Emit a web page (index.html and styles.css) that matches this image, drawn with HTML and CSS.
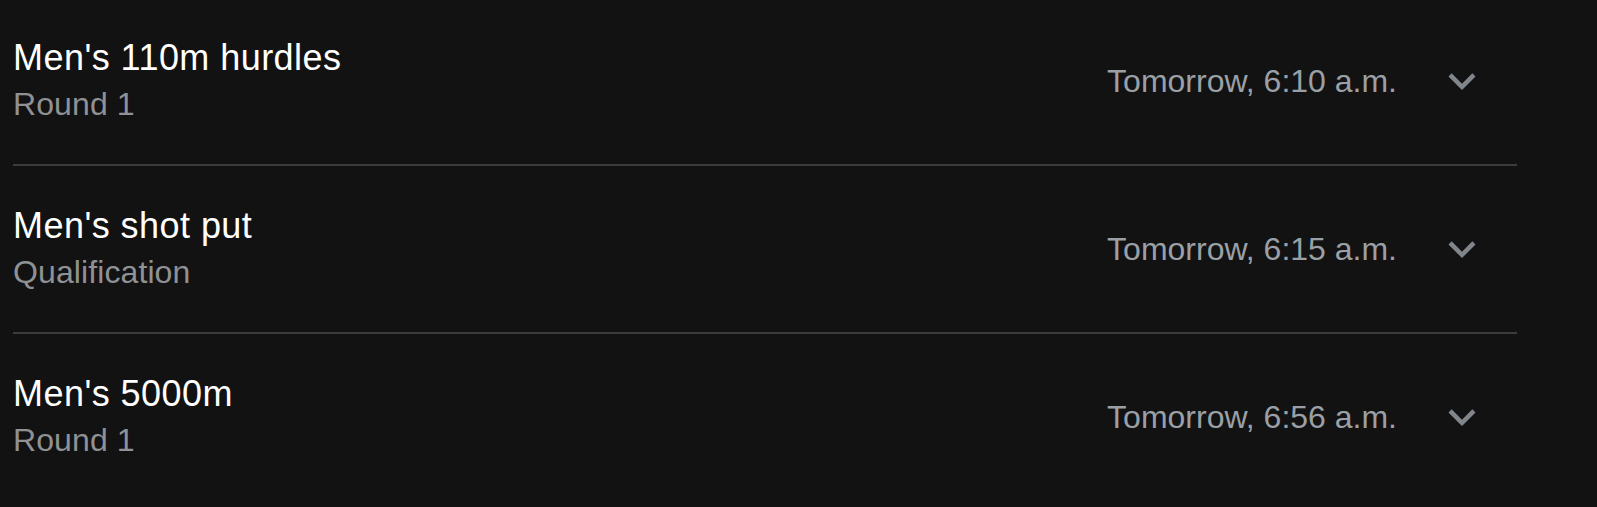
FILE: index.html
```html
<!DOCTYPE html>
<html lang="en">
<head>
<meta charset="utf-8">
<title>Schedule</title>
<link rel="stylesheet" href="styles.css">
</head>
<body>
<div class="list">
  <div class="row">
    <div class="info">
      <div class="title">Men's 110m hurdles</div>
      <div class="sub">Round 1</div>
    </div>
    <div class="meta">
      <span class="time">Tomorrow, 6:10 a.m.</span>
      <svg class="chev" viewBox="0 0 24 24"><path d="M16.59 8.59L12 13.17 7.41 8.59 6 10l6 6 6-6z"/></svg>
    </div>
  </div>
  <div class="row">
    <div class="info">
      <div class="title">Men's shot put</div>
      <div class="sub">Qualification</div>
    </div>
    <div class="meta">
      <span class="time">Tomorrow, 6:15 a.m.</span>
      <svg class="chev" viewBox="0 0 24 24"><path d="M16.59 8.59L12 13.17 7.41 8.59 6 10l6 6 6-6z"/></svg>
    </div>
  </div>
  <div class="row last">
    <div class="info">
      <div class="title">Men's 5000m</div>
      <div class="sub">Round 1</div>
    </div>
    <div class="meta">
      <span class="time">Tomorrow, 6:56 a.m.</span>
      <svg class="chev" viewBox="0 0 24 24"><path d="M16.59 8.59L12 13.17 7.41 8.59 6 10l6 6 6-6z"/></svg>
    </div>
  </div>
</div>
</body>
</html>
```
FILE: styles.css
```css
html, body {
  margin: 0;
  padding: 0;
  background: #121212;
  height: 100%;
  overflow: hidden;
}
body {
  font-family: "Liberation Sans", Arial, sans-serif;
}
.list {
  width: 1504px;
  margin-left: 13px;
}
.row {
  display: flex;
  align-items: center;
  padding: 36px 28px 38px 0;
  border-bottom: 2px solid #3c3c3e;
}
.row:first-child {
  padding-top: 34px;
}
.row.last {
  border-bottom: none;
}
.info {
  flex: 1;
}
.title {
  color: #ffffff;
  font-size: 36px;
  letter-spacing: 0.45px;
  line-height: 48px;
}
.sub {
  color: #8f9194;
  font-size: 32px;
  letter-spacing: 0.1px;
  line-height: 44px;
}
.meta {
  display: flex;
  align-items: center;
  padding-top: 2px;
}
.time {
  color: #9aa0a6;
  font-size: 32px;
}
.chev {
  width: 54px;
  height: 54px;
  margin-left: 38px;
  fill: #80868b;
}
```
